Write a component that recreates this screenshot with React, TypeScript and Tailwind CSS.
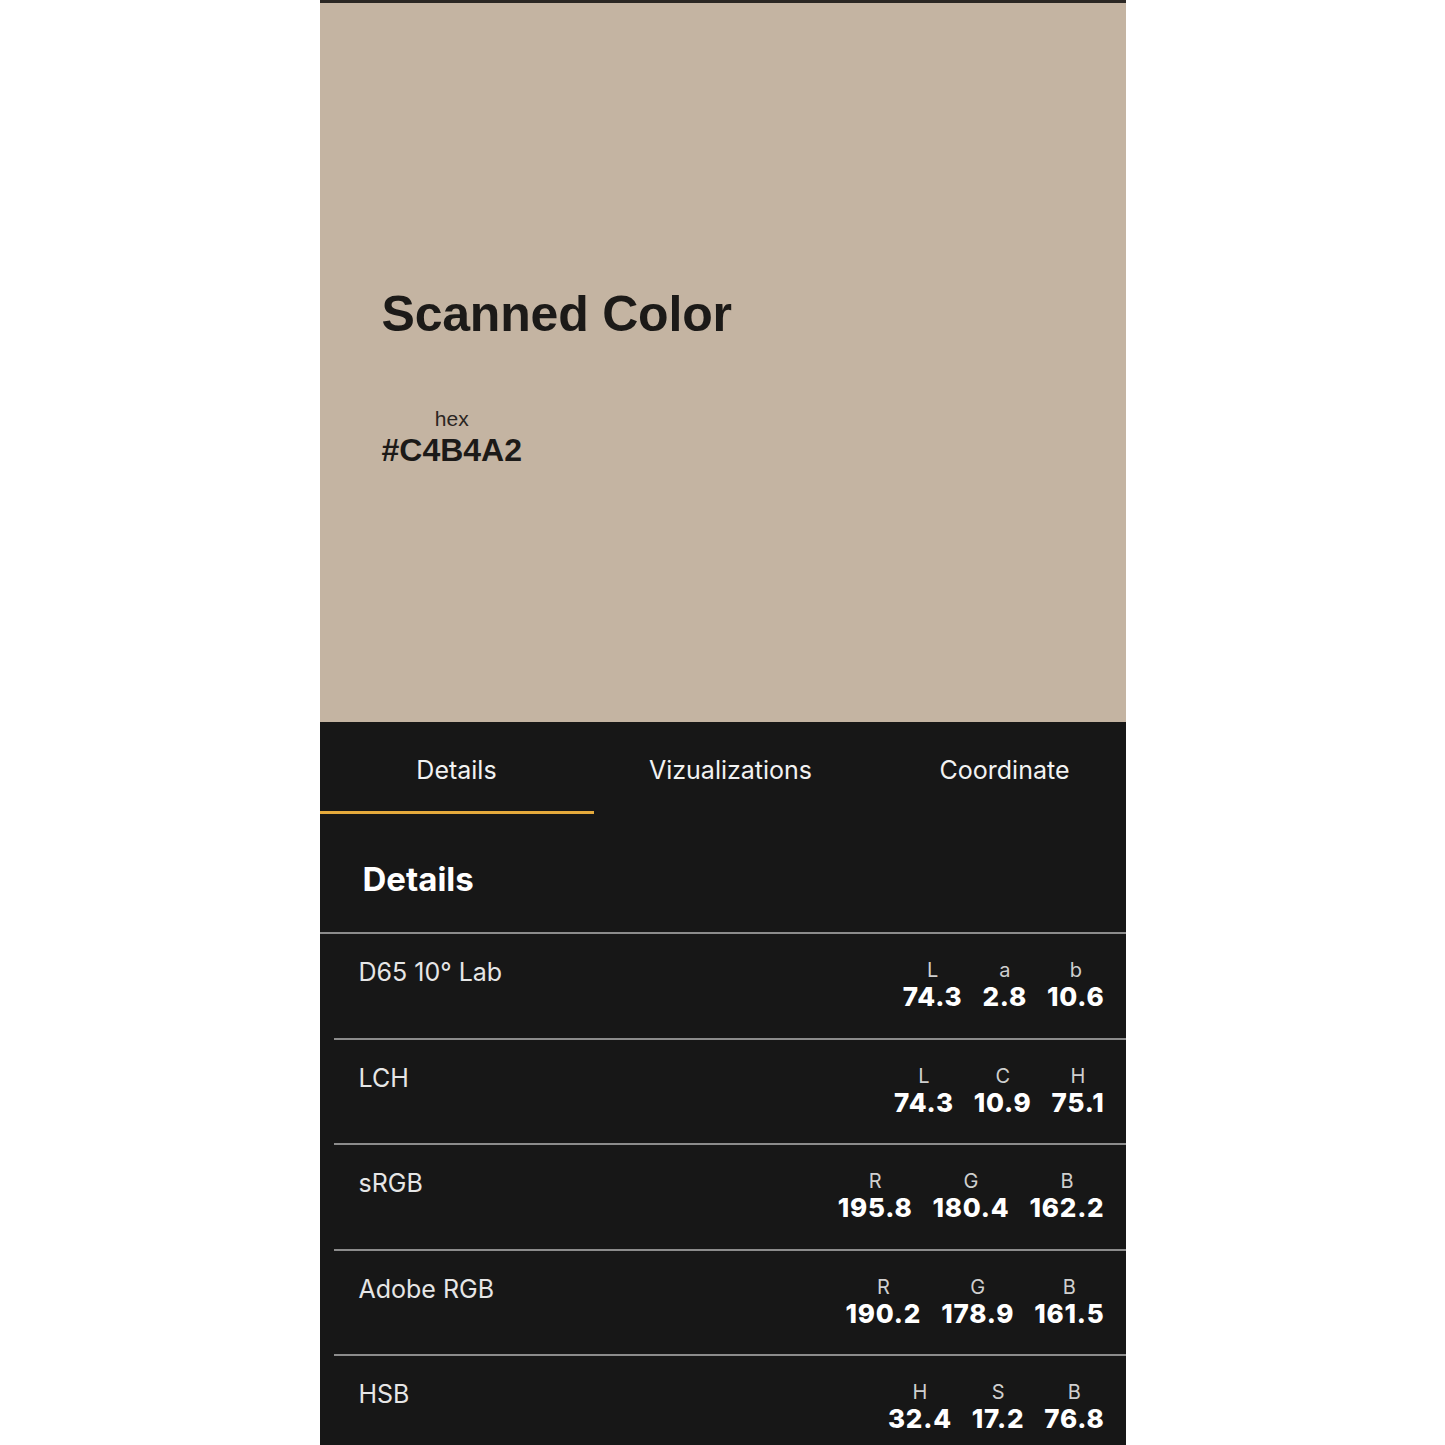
import { useState } from 'react';

const rows = [
  { name: 'D65 10° Lab', keys: ['L', 'a', 'b'], vals: ['74.3', '2.8', '10.6'] },
  { name: 'LCH', keys: ['L', 'C', 'H'], vals: ['74.3', '10.9', '75.1'] },
  { name: 'sRGB', keys: ['R', 'G', 'B'], vals: ['195.8', '180.4', '162.2'] },
  { name: 'Adobe RGB', keys: ['R', 'G', 'B'], vals: ['190.2', '178.9', '161.5'] },
  { name: 'HSB', keys: ['H', 'S', 'B'], vals: ['32.4', '17.2', '76.8'] },
];

const tabs = ['Details', 'Vizualizations', 'Coordinate'];

export default function App() {
  const [active, setActive] = useState(0);

  return (
    <div className="min-h-[1445px] bg-white flex justify-center">
      <div className="w-[806px] h-[1445px] overflow-hidden flex flex-col">
        {/* Color swatch */}
        <div className="h-[3px] shrink-0 bg-[#2b2723]" />
        <div className="h-[719px] shrink-0 bg-[#C4B4A2] pl-[62px] pt-[285.5px] font-['Liberation_Sans',Arial,sans-serif] text-[#1c1a18]">
          <h1 className="text-[50px] leading-[50px] font-bold tracking-[-0.2px]">Scanned Color</h1>
          <div className="mt-[68.5px] inline-flex flex-col items-center">
            <span className="text-[21px] leading-[24px] text-[#2b2622]">hex</span>
            <span className="mt-[1px] text-[32px] leading-[36px] font-bold">#C4B4A2</span>
          </div>
        </div>

        {/* Dark panel */}
        <div className="flex-1 bg-[#171717] font-['Inter',sans-serif] text-white">
          <div className="flex h-[92px] overflow-hidden">
            {tabs.map((t, i) => (
              <button
                key={t}
                onClick={() => setActive(i)}
                className={
                  'w-[274px] shrink-0 flex justify-center pt-[33px] text-[25px] leading-[30px] font-normal text-[#f2f2f2] border-b-[3px] ' +
                  (active === i ? 'border-[#E5AA3C]' : 'border-transparent')
                }
              >
                {t}
              </button>
            ))}
          </div>

          <div className="pl-[43px] pt-[45px] pb-[33px]">
            <h2 className="text-[33px] leading-[40px] font-bold">Details</h2>
          </div>
          <div className="h-[2px] bg-[#8c8c8c]" />

          {rows.map((r) => (
            <div key={r.name} className="ml-[14px] h-[105.5px] border-b-2 border-[#8c8c8c] flex justify-between items-start pl-[25px] pr-[21px] pt-[23px]">
              <span className="text-[25px] leading-[30px] text-[#e6e6e6]">{r.name}</span>
              <div className="flex gap-[20px] pt-[1px]">
                {r.vals.map((v, i) => (
                  <div key={i} className="flex flex-col items-center">
                    <span className="text-[20px] leading-[24px] text-[#cfcfcf]">{r.keys[i]}</span>
                    <span className="text-[26px] leading-[30px] font-extrabold tracking-[0.8px]">{v}</span>
                  </div>
                ))}
              </div>
            </div>
          ))}
        </div>
      </div>
    </div>
  );
}
